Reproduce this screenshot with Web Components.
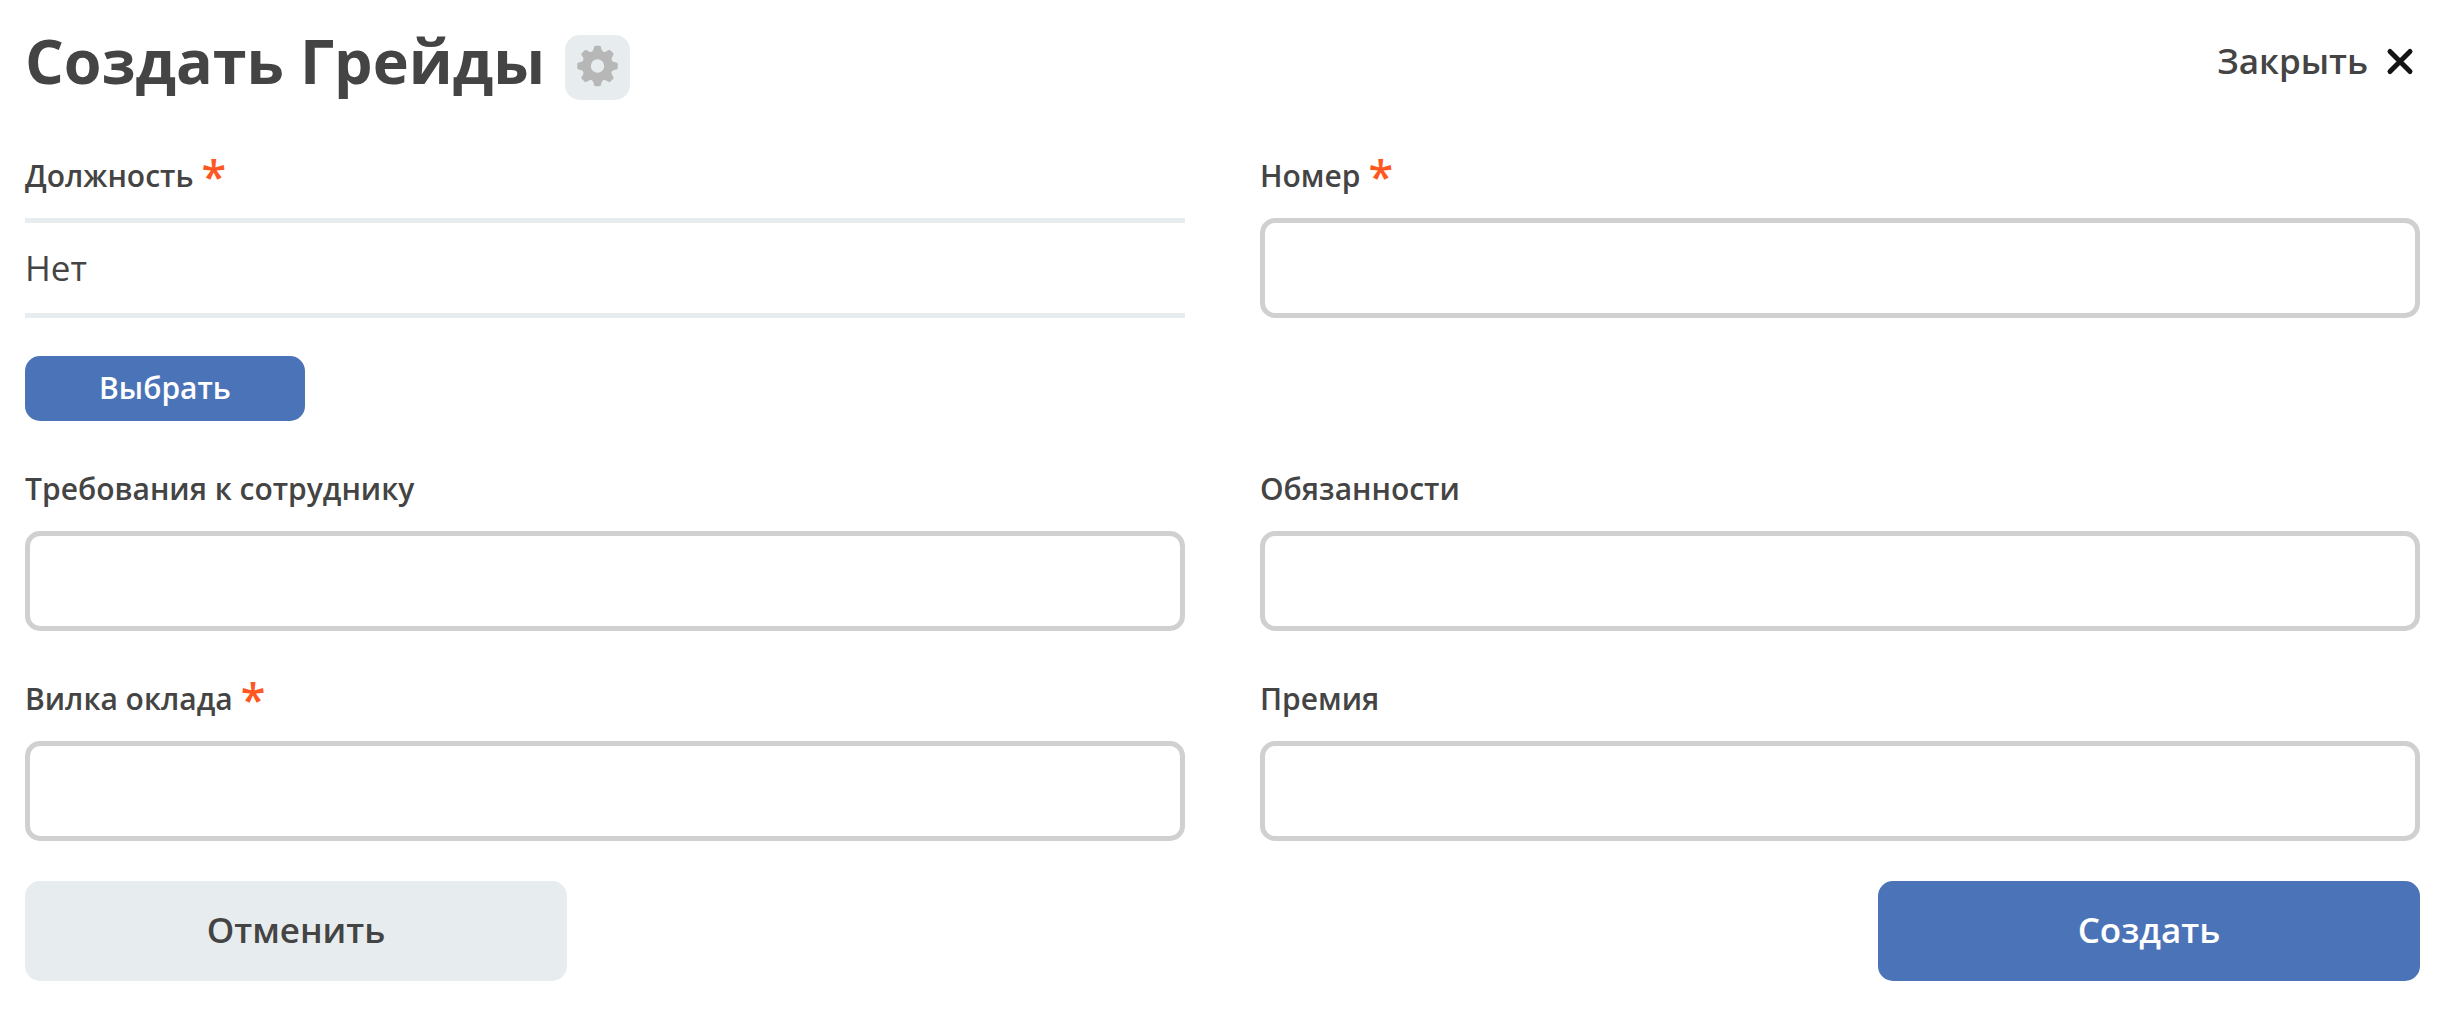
<!DOCTYPE html>
<html lang="ru">
<head>
<meta charset="utf-8">
<meta name="viewport" content="width=device-width, initial-scale=1">
<title>Создать Грейды</title>
<style>
  body {
    margin: 0;
    background: #fff;
    color: #444;
    font-family: "Open Sans", "Noto Sans", sans-serif;
    --accent: #4b74b8;
    --muted: #e7edef;
    --border: #d0d0d0;
    --required: #ff5722;
    --radius: 15px;
  }
</style>
</head>
<body>
<grade-form></grade-form>

<template id="grade-form">
  <style>
    :host { display: block; padding: 20px 29px 40px 25px; }
    form { display: flex; flex-direction: column; gap: 40px; }
    .fields { display: grid; grid-template-columns: 1fr 1fr; gap: 40px 75px; padding-top: 6px; }
    footer { display: flex; justify-content: space-between; }
  </style>
  <form>
    <form-header>Создать Грейды</form-header>
    <div class="fields">
      <pick-field label="Должность" value="Нет" required></pick-field>
      <text-field label="Номер" required></text-field>
      <text-field label="Требования к сотруднику"></text-field>
      <text-field label="Обязанности"></text-field>
      <text-field label="Вилка оклада" required></text-field>
      <text-field label="Премия"></text-field>
    </div>
    <footer>
      <form-button kind="secondary">Отменить</form-button>
      <form-button kind="primary">Создать</form-button>
    </footer>
  </form>
</template>

<template id="form-header">
  <style>
    :host { display: flex; justify-content: space-between; align-items: center; }
    .title { display: flex; align-items: flex-end; gap: 20px; }
    h1 { margin: 0; font-size: 61px; line-height: 82px; font-weight: 700; }
    button { border: 0; padding: 0; font: inherit; color: inherit; cursor: pointer; background: none; }
    .settings { display: flex; justify-content: center; align-items: center; width: 65px; height: 65px; margin-bottom: 2px; border-radius: var(--radius); background: var(--muted); }
    .close { display: flex; align-items: center; gap: 12px; font-size: 35px; line-height: 50px; font-weight: 600; }
    svg { display: block; }
  </style>
  <div class="title">
    <h1><slot></slot></h1>
    <button class="settings" type="button" aria-label="Настройки">
      <svg width="45" height="45" viewBox="-22.5 -21 45 45" fill="#b7b7b7">
        <circle r="11" fill="none" stroke="#b7b7b7" stroke-width="8.6"/>
        <g id="pair">
          <path id="tooth" d="M-8 -12Q-4.200 -14-3.500 -18.800Q-3.200 -20.200-2.200 -20.200H2.200Q3.200 -20.200 3.500 -18.800Q4.200 -14 8 -12Z"/>
          <use href="#tooth" transform="rotate(45)"/>
        </g>
        <use href="#pair" transform="rotate(90)"/>
        <use href="#pair" transform="rotate(180)"/>
        <use href="#pair" transform="rotate(270)"/>
      </svg>
    </button>
  </div>
  <button class="close" type="button">
    <span>Закрыть</span>
    <svg width="40" height="40" viewBox="0 0 40 40" stroke="#141414" stroke-width="5" stroke-linecap="round"><path d="M10 10.500L30 30.500M30 10.500L10 30.500"/></svg>
  </button>
</template>

<template id="field-label">
  <style>
    :host { display: flex; align-items: center; gap: 8px; height: 55px; margin-bottom: 15px; font-size: 30px; line-height: 55px; font-weight: 600; }
    .mark { display: none; font-size: 45px; color: var(--required); }
    :host([required]) .mark { display: block; }
  </style>
  <slot></slot><span class="mark" aria-hidden="true">*</span>
</template>

<template id="text-field">
  <style>
    :host { display: block; }
    label { display: block; }
    input { display: block; box-sizing: border-box; width: 100%; height: 100px; margin: 0; padding: 0 20px; border: 5px solid var(--border); border-radius: var(--radius); background: #fff; color: inherit; font: inherit; font-size: 35px; outline: 0; }
    input:focus { border-color: var(--accent); }
  </style>
  <label for="control"><field-label></field-label></label>
  <input id="control" type="text">
</template>

<template id="pick-field">
  <style>
    :host { display: block; }
    output { display: block; padding: 20px 0; border: solid var(--muted); border-width: 5px 0; margin-bottom: 38px; font-size: 35px; line-height: 50px; }
  </style>
  <label for="value"><field-label></field-label></label>
  <output id="value"></output>
  <form-button kind="small">Выбрать</form-button>
</template>

<template id="form-button">
  <style>
    :host { display: block; width: 542px; }
    :host([kind="small"]) { width: 280px; }
    button { display: block; width: 100%; border: 0; margin: 0; padding: 24px 0 26px; border-radius: var(--radius); background: var(--accent); color: #fff; font-family: inherit; font-size: 35px; line-height: 50px; font-weight: 600; cursor: pointer; }
    :host([kind="secondary"]) button { background: var(--muted); color: #444; }
    :host([kind="small"]) button { font-size: 30px; line-height: 45px; padding: 9px 0 11px; }
  </style>
  <button type="button"><slot></slot></button>
</template>

<script>
  class TemplateElement extends HTMLElement {
    constructor() {
      super();
      const template = document.getElementById(this.localName);
      this.attachShadow({ mode: "open" }).append(template.content.cloneNode(true));
    }
  }

  class FieldElement extends TemplateElement {
    connectedCallback() {
      const caption = this.shadowRoot.querySelector("field-label");
      caption.textContent = this.getAttribute("label");
      caption.toggleAttribute("required", this.hasAttribute("required"));
    }
  }

  class TextField extends FieldElement {
    connectedCallback() {
      super.connectedCallback();
      this.shadowRoot.querySelector("input").required = this.hasAttribute("required");
    }
  }

  class PickField extends FieldElement {
    connectedCallback() {
      super.connectedCallback();
      this.shadowRoot.querySelector("output").textContent = this.getAttribute("value");
    }
  }

  customElements.define("field-label", class extends TemplateElement {});
  customElements.define("form-button", class extends TemplateElement {});
  customElements.define("form-header", class extends TemplateElement {});
  customElements.define("text-field", TextField);
  customElements.define("pick-field", PickField);
  customElements.define("grade-form", class extends TemplateElement {});
</script>
</body>
</html>
